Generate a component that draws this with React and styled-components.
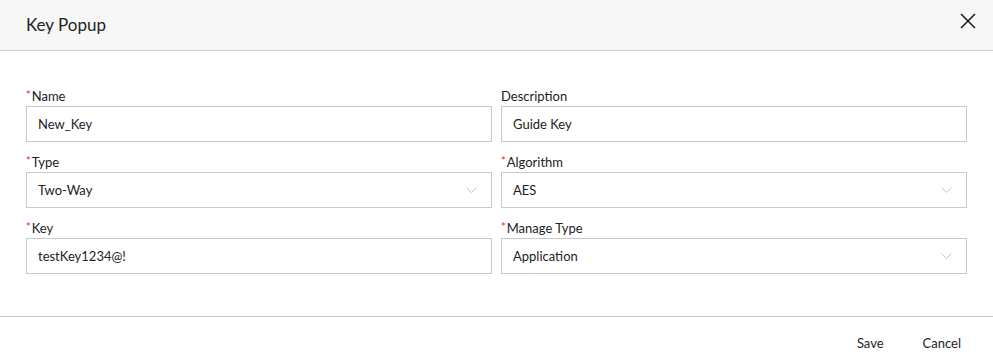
import React from 'react'
import styled, { createGlobalStyle } from 'styled-components'

const GlobalStyle = createGlobalStyle`
  html, body {
    margin: 0;
    padding: 0;
    background: #fff;
  }
  body {
    font-family: Lato, "Noto Sans", "Liberation Sans", sans-serif;
    color: #222;
  }
`

const StyledPopup = styled.div`
  width: 993px;
  height: 364px;
  background: #fff;
  display: flex;
  flex-direction: column;
  overflow: hidden;
`

const StyledHeader = styled.div`
  height: 50px;
  flex-shrink: 0;
  display: flex;
  align-items: center;
  justify-content: space-between;
  padding: 0 16px 0 26px;
  background: #f7f7f7;
  border-bottom: 1px solid #c8c8c8;
  box-sizing: content-box;
`

const StyledTitle = styled.h2`
  margin: 0 0 2px;
  font-size: 17px;
  font-weight: 400;
  color: #1f1f1f;
`

const StyledClose = styled.button`
  border: 0;
  background: none;
  padding: 0;
  width: 18px;
  height: 18px;
  display: flex;
  cursor: pointer;
  margin-top: -8px;
`

const StyledBody = styled.div`
  flex: 1;
  display: grid;
  grid-template-columns: 466px 466px;
  column-gap: 9px;
  row-gap: 11px;
  align-content: start;
  padding: 36px 27px 0 26px;
  border-bottom: 1px solid #c8c8c8;
`

const StyledField = styled.div`
  display: flex;
  flex-direction: column;
`

const StyledLabel = styled.label`
  display: block;
  height: 19px;
  line-height: 19px;
  font-size: 13px;
  color: #222;
`

const StyledRequired = styled.span`
  position: relative;
  top: -2px;
  line-height: 0;
  color: #e8262d;
  font-size: 11px;
  margin-right: 1px;
`

const StyledBox = styled.div`
  position: relative;
  height: 36px;
  box-sizing: border-box;
  border: 1px solid #c9c9c9;
  background: #fff;
  display: flex;
  align-items: center;
  padding: 0 11px;
  font-size: 13px;
  color: #222;
`

const StyledChevron = styled.svg`
  position: absolute;
  right: 14px;
  top: 50%;
  margin-top: -3px;
`

const StyledFooter = styled.div`
  height: 47px;
  box-sizing: border-box;
  flex-shrink: 0;
  display: flex;
  align-items: center;
  justify-content: flex-end;
  gap: 39px;
  padding: 4px 32px 0 0;
`

const StyledAction = styled.button`
  border: 0;
  background: none;
  padding: 0;
  font-family: inherit;
  font-size: 13px;
  color: #222;
  cursor: pointer;
`

const fields = [
  { label: 'Name', value: 'New_Key', required: true },
  { label: 'Description', value: 'Guide Key' },
  { label: 'Type', value: 'Two-Way', required: true, select: true },
  { label: 'Algorithm', value: 'AES', required: true, select: true },
  { label: 'Key', value: 'testKey1234@!', required: true },
  { label: 'Manage Type', value: 'Application', required: true, select: true },
]

const Field = ({ label, value, required, select }) => (
  <StyledField>
    <StyledLabel>
      {required && <StyledRequired>*</StyledRequired>}
      {label}
    </StyledLabel>
    <StyledBox>
      {value}
      {select && (
        <StyledChevron width="11" height="6" viewBox="0 0 11 6">
          <path d="M0.5 0.5 L5.5 5.5 L10.5 0.5" fill="none" stroke="#c4c4c4" strokeWidth="1" />
        </StyledChevron>
      )}
    </StyledBox>
  </StyledField>
)

const App = () => (
  <StyledPopup>
    <GlobalStyle />
    <StyledHeader>
      <StyledTitle>Key Popup</StyledTitle>
      <StyledClose aria-label="close">
        <svg width="18" height="18" viewBox="0 0 18 18">
          <path d="M2 2 L16 16 M16 2 L2 16" stroke="#222" strokeWidth="1.6" />
        </svg>
      </StyledClose>
    </StyledHeader>
    <StyledBody>
      {fields.map(f => <Field key={f.label} {...f} />)}
    </StyledBody>
    <StyledFooter>
      <StyledAction>Save</StyledAction>
      <StyledAction>Cancel</StyledAction>
    </StyledFooter>
  </StyledPopup>
)

export default App
